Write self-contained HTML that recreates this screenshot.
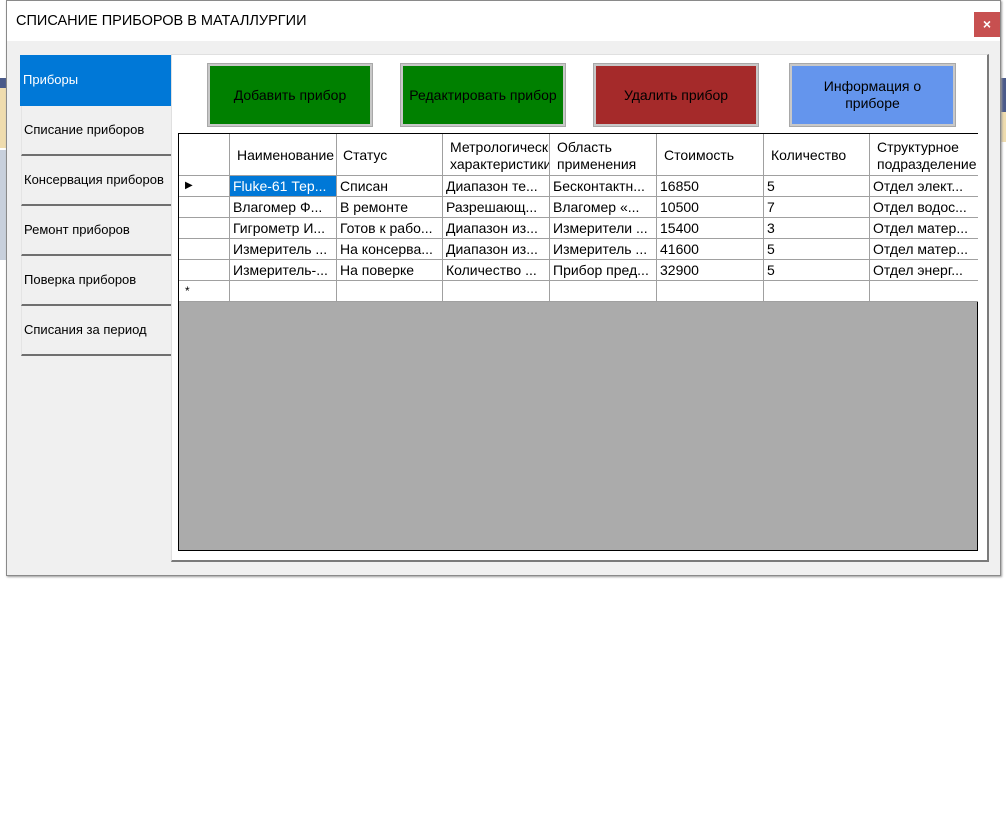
<!DOCTYPE html>
<html><head><meta charset="utf-8"><style>
*{margin:0;padding:0;box-sizing:border-box}
body{width:1006px;height:820px;background:#fff;position:relative;overflow:hidden;font-family:"Liberation Sans","DejaVu Sans",sans-serif;font-size:13px;color:#000}
.a{position:absolute}
.win{left:6px;top:0;width:995px;height:576px;background:#f0f0f0;border:1px solid #8a8a8a;box-shadow:1px 1px 2px #999}
.title{left:0;top:0;width:993px;height:40px;background:#fff}
.tab{left:14px;width:150px;height:50px;background:#f0f0f0;border-bottom:2px solid #6f6f6f;border-left:1px solid #e4e4e4;padding-left:2px;line-height:48px;font-size:13px}
.btn{height:62px;border:2px solid #c8c8c8;outline:1px solid #a8a8a8;display:flex;align-items:center;justify-content:center;text-align:center;font-size:14px;line-height:17px}
.c{position:absolute;border-right:1px solid #a0a0a0;border-bottom:1px solid #a0a0a0;background:#fff;white-space:nowrap;overflow:hidden;padding-left:3px;line-height:20px;font-size:14px}
.h{font-size:14px}
</style></head><body>
<div class="a" style="left:0;top:78px;width:6px;height:10px;background:#4a5a8a"></div>
<div class="a" style="left:0;top:88px;width:6px;height:60px;background:#efdcae"></div>
<div class="a" style="left:0;top:150px;width:6px;height:110px;background:#c8d0dc"></div>
<div class="a" style="left:1000px;top:78px;width:6px;height:34px;background:#4a5a8a"></div>
<div class="a" style="left:1000px;top:112px;width:6px;height:30px;background:#efdcae"></div>
<div class="a win">
 <div class="a title"></div>
 <div class="a" style="left:9px;top:12px;font-size:14.5px">СПИСАНИЕ ПРИБОРОВ В МАТАЛЛУРГИИ</div>
 <div class="a" style="left:967px;top:11px;width:26px;height:25px;background:#c75050;color:#fff;font-weight:bold;text-align:center;line-height:24px;font-size:14px">×</div>
 <div class="a" style="left:13px;top:54px;width:151px;height:51px;background:#0078d7;color:#fff;padding-left:3px;line-height:50px">Приборы</div>
 <div class="a tab" style="top:105px">Списание приборов</div>
 <div class="a tab" style="top:155px">Консервация приборов</div>
 <div class="a tab" style="top:205px">Ремонт приборов</div>
 <div class="a tab" style="top:255px">Поверка приборов</div>
 <div class="a tab" style="top:305px">Списания за период</div>
 <div class="a" style="left:164px;top:53px;width:818px;height:508px;background:#fff;border-top:1px solid #e0e0e0;border-left:1px solid #e0e0e0;border-right:2px solid #7a7a7a;border-bottom:2px solid #7a7a7a"></div>
 <div class="a btn" style="left:201px;top:63px;width:164px;background:#008000">Добавить прибор</div>
 <div class="a btn" style="left:394px;top:63px;width:164px;background:#008000">Редактировать прибор</div>
 <div class="a btn" style="left:587px;top:63px;width:164px;background:#a52a2a">Удалить прибор</div>
 <div class="a btn" style="left:783px;top:63px;width:165px;background:#6495ed">Информация о<br>приборе</div>
 <div class="a" style="left:171px;top:132px;width:800px;height:418px;background:#ababab;border:1px solid #000">
  <div class="c h" style="left:0;top:0;width:51px;height:42px"></div>
  <div class="c h" style="left:51px;top:0;width:107px;height:42px;line-height:42px;padding-left:7px">Наименование</div>
  <div class="c h" style="left:158px;top:0;width:106px;height:42px;line-height:42px;padding-left:6px">Статус</div>
  <div class="c h" style="left:264px;top:0;width:107px;height:42px;padding:5px 0 0 7px;line-height:17px">Метрологические<br>характеристики</div>
  <div class="c h" style="left:371px;top:0;width:107px;height:42px;padding:5px 0 0 7px;line-height:17px">Область<br>применения</div>
  <div class="c h" style="left:478px;top:0;width:107px;height:42px;line-height:42px;padding-left:7px">Стоимость</div>
  <div class="c h" style="left:585px;top:0;width:106px;height:42px;line-height:42px;padding-left:7px">Количество</div>
  <div class="c h" style="left:691px;top:0;width:108px;height:42px;padding:5px 0 0 7px;line-height:17px;border-right:none">Структурное<br>подразделение</div>
  <div id="rows"></div>
 </div>
</div>
<script>
var d=[["Fluke-61 Тер...","Списан","Диапазон те...","Бесконтактн...","16850","5","Отдел элект..."],
["Влагомер Ф...","В ремонте","Разрешающ...","Влагомер «...","10500","7","Отдел водос..."],
["Гигрометр И...","Готов к рабо...","Диапазон из...","Измерители ...","15400","3","Отдел матер..."],
["Измеритель ...","На консерва...","Диапазон из...","Измеритель ...","41600","5","Отдел матер..."],
["Измеритель-...","На поверке","Количество ...","Прибор пред...","32900","5","Отдел энерг..."],
["","","","","","",""]];
var L=[51,158,264,371,478,585,691],W=[107,106,107,107,107,106,108],h="";
d.forEach(function(r,i){var t=42+i*21;
h+='<div class="c" style="left:0;top:'+t+'px;width:51px;height:21px;text-align:left;padding-left:6px;font-size:10px">'+(i==0?'▶':i==5?'<span style="font-size:12px">*</span>':'')+'</div>';
r.forEach(function(v,j){var s=(i==0&&j==0)?'background:#0078d7;color:#fff;':'';
h+='<div class="c" style="'+s+'left:'+L[j]+'px;top:'+t+'px;width:'+W[j]+'px;height:21px;'+(j==6?'border-right:none;':'')+'">'+v+'</div>';});});
document.getElementById("rows").innerHTML=h;
</script>
</body></html>
